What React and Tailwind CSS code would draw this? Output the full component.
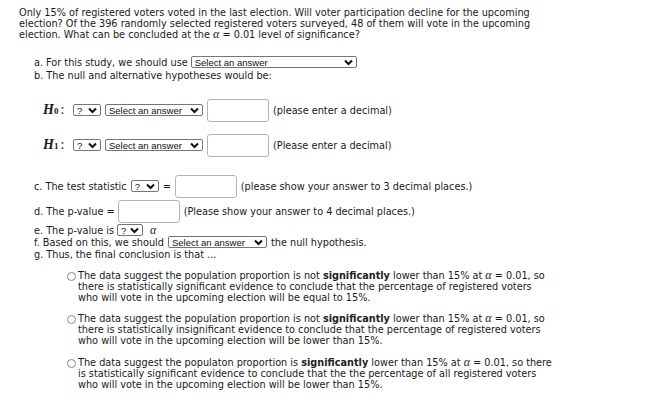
import React from 'react';

const Chevron = () => (
    <svg width="9" height="7" viewBox="0 0 9 7" className="shrink-0">
        <path d="M1 1.5 L4.5 5 L8 1.5" fill="none" stroke="#111" strokeWidth="2" />
    </svg>
);

const Select = ({ label, width }) => (
    <span
        className={`inline-flex items-center justify-between h-[12px] border border-[#767676] rounded-[2px] bg-white pl-[3px] pr-[3px] text-[9.5px] leading-none font-['Liberation_Sans',Arial,sans-serif] text-[#111] ${width}`}
    >
        <span className="pt-[1px]">{label}</span>
        <Chevron />
    </span>
);

const Box = ({ className }) => (
    <span className={`inline-block w-[62px] h-[23px] border border-[#b4b4b4] rounded-[3px] bg-white ${className}`} />
);

const Hyp = ({ sub }) => (
    <span className="font-['Liberation_Serif',serif] text-[14px] w-[30px] inline-flex items-baseline">
        <i className="font-semibold">H</i>
        <span className="text-[9px] font-semibold">{sub}</span>
        <span className="ml-[2px]">:</span>
    </span>
);

const Alpha = () => <i className="font-['Liberation_Serif',serif] text-[12px] leading-[9px]">α</i>;

const Sig = () => <b className="font-semibold text-[#222]">significantly</b>;

const Option = ({ children, className }) => (
    <div className={`flex ${className}`}>
        <span className="mt-[2px] w-[9px] h-[9px] rounded-full border border-[#888] bg-white shrink-0" />
        <p className="ml-[2px] whitespace-nowrap">{children}</p>
    </div>
);

const App = () => {
    return (
        <div className="w-[658px] h-[407px] bg-white text-[#1a1a1a] font-['DejaVu_Sans_Condensed','Open_Sans',sans-serif] text-[10.8px] leading-[11px] pl-[19px] pt-[7px]">
            <p className="whitespace-nowrap">
                Only 15% of registered voters voted in the last election. Will voter participation decline for the upcoming<br />
                election? Of the 396 randomly selected registered voters surveyed, 48 of them will vote in the upcoming<br />
                election. What can be concluded at the <Alpha /> = 0.01 level of significance?
            </p>

            <div className="pl-[15px]">
                <div className="mt-[16px] h-[12px] flex items-center">
                    <span>a. For this study, we should use</span>
                    <span className="ml-[3px]"><Select label="Select an answer" width="w-[166px]" /></span>
                </div>
                <div className="mt-[1px] h-[12px] flex items-center">b. The null and alternative hypotheses would be:</div>

                <div className="mt-[17px] h-[24px] flex items-center pl-[9px]">
                    <Hyp sub="0" />
                    <Select label="?" width="w-[28px]" />
                    <span className="ml-[4px]"><Select label="Select an answer" width="w-[98px]" /></span>
                    <Box className="ml-[4px]" />
                    <span className="ml-[4px]">(please enter a decimal)</span>
                </div>
                <div className="mt-[11px] h-[24px] flex items-center pl-[9px]">
                    <Hyp sub="1" />
                    <Select label="?" width="w-[28px]" />
                    <span className="ml-[4px]"><Select label="Select an answer" width="w-[98px]" /></span>
                    <Box className="ml-[4px]" />
                    <span className="ml-[4px]">(Please enter a decimal)</span>
                </div>

                <div className="mt-[17px] h-[24px] flex items-center">
                    <span>c. The test statistic</span>
                    <span className="ml-[4px]"><Select label="?" width="w-[28px]" /></span>
                    <span className="ml-[4px]">=</span>
                    <Box className="ml-[4px]" />
                    <span className="ml-[4px]">(please show your answer to 3 decimal places.)</span>
                </div>
                <div className="mt-[1px] h-[24px] flex items-center">
                    <span>d. The p-value =</span>
                    <Box className="ml-[3px]" />
                    <span className="ml-[4px]">(Please show your answer to 4 decimal places.)</span>
                </div>
                <div className="mt-[1px] h-[12px] flex items-center">
                    <span>e. The p-value is</span>
                    <span className="ml-[3px]"><Select label="?" width="w-[26px]" /></span>
                    <span className="ml-[7px]"><Alpha /></span>
                </div>
                <div className="h-[12px] flex items-center">
                    <span>f. Based on this, we should</span>
                    <span className="ml-[4px]"><Select label="Select an answer" width="w-[99px]" /></span>
                    <span className="ml-[4px]">the null hypothesis.</span>
                </div>
                <div className="h-[12px] flex items-center">g. Thus, the final conclusion is that ...</div>

                <div className="pl-[33px]">
                    <Option className="mt-[10px]">
                        The data suggest the population proportion is not <Sig /> lower than 15% at <Alpha /> = 0.01, so<br />
                        there is statistically significant evidence to conclude that the percentage of registered voters<br />
                        who will vote in the upcoming election will be equal to 15%.
                    </Option>
                    <Option className="mt-[10px]">
                        The data suggest the population proportion is not <Sig /> lower than 15% at <Alpha /> = 0.01, so<br />
                        there is statistically insignificant evidence to conclude that the percentage of registered voters<br />
                        who will vote in the upcoming election will be lower than 15%.
                    </Option>
                    <Option className="mt-[11px]">
                        The data suggest the populaton proportion is <Sig /> lower than 15% at <Alpha /> = 0.01, so there<br />
                        is statistically significant evidence to conclude that the the percentage of all registered voters<br />
                        who will vote in the upcoming election will be lower than 15%.
                    </Option>
                </div>
            </div>
        </div>
    );
};

export default App;
